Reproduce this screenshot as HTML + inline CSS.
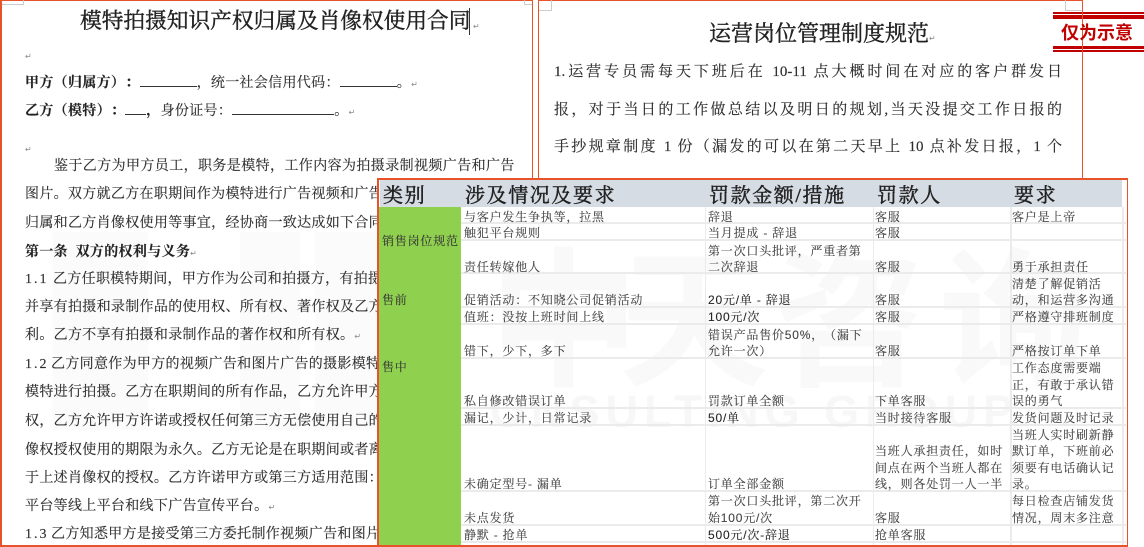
<!DOCTYPE html>
<html lang="zh-CN"><head><meta charset="utf-8"><style>
*{box-sizing:border-box;text-spacing-trim:space-all}
html,body{margin:0;padding:0;background:#fff}
#p{position:relative;width:1144px;height:547px;overflow:hidden;background:#fff;font-family:"Liberation Serif","Noto Serif CJK SC",serif;color:#2c2c2c}
#p div{position:absolute}
.t{white-space:nowrap;line-height:20px;height:20px;font-size:14px;letter-spacing:.32px;left:25px;filter:blur(.25px);-webkit-text-stroke:.15px #333}
.b{font-weight:700;color:#222}
.u{display:inline-block;border-bottom:1px solid #333;height:14px}
.m{font-family:"DejaVu Sans",sans-serif;font-size:8px;color:#888;font-weight:400;letter-spacing:0;-webkit-text-stroke:0}
.r{left:554px;width:508px;font-size:15px;text-align:justify;text-align-last:justify;letter-spacing:0}
.h{white-space:nowrap;top:184px;line-height:24px;font-size:20px;letter-spacing:1.6px;color:#222;filter:blur(.25px);-webkit-text-stroke:.45px #222}
.c{white-space:nowrap;font-family:"Liberation Sans","Noto Serif CJK SC",serif;font-size:12px;letter-spacing:.8px;line-height:16px;height:16px;color:#444;filter:blur(.25px);-webkit-text-stroke:.12px #444;margin-top:1px}
.l{background:#ebebeb}
.w{white-space:nowrap;color:#f9f9f9;font-family:"Noto Sans CJK SC",sans-serif;font-weight:700;line-height:1}
</style></head><body><div id="p">

<div style="left:53px;top:232px;width:95px;height:198px;background:#fbfbfb"></div>
<div style="left:240px;top:232px;width:60px;height:198px;background:#fbfbfb"></div>
<div style="left:315px;top:232px;width:62px;height:198px;background:#fbfbfb"></div>

<div style="left:0;top:0;width:533px;height:547px;border:solid #e8532b;border-width:1px 1px 0 2px"></div>
<div style="left:538px;top:0;width:545px;height:180px;border:1px solid #e8532b;border-bottom:0"></div>
<div style="left:2px;top:0;width:22px;height:5px;border:solid #ccc;border-width:0 1px 1px 0"></div>
<div style="left:524px;top:0;width:8px;height:5px;border:solid #ccc;border-width:0 0 1px 1px"></div>
<div style="left:539px;top:0;width:13px;height:11px;border:solid #ccc;border-width:0 1px 1px 0"></div>
<div style="left:1065px;top:0;width:17px;height:11px;border:solid #ccc;border-width:0 0 1px 1px"></div>

<div class="t" style="left:80px;top:6px;height:30px;line-height:30px;font-size:21.7px;letter-spacing:0;color:#222;-webkit-text-stroke:.4px #222">模特拍摄知识产权归属及肖像权使用合同</div>
<div style="left:469px;top:8px;width:1px;height:27px;background:#333"></div>
<div class="t m" style="left:473px;top:17px">↵</div>
<div class="t m" style="left:25px;top:47px">↵</div>
<div class="t" style="top:73px"><span class="b">甲方（归属方）：</span><span class="u" style="width:57px"></span>，统一社会信用代码：<span class="u" style="width:57px"></span>。<span class="m">↵</span></div>
<div class="t" style="top:101px"><span class="b">乙方（模特）：</span><span class="u" style="width:21px"></span><span class="b">，</span>身份证号：<span class="u" style="width:102px"></span>。<span class="m">↵</span></div>
<div class="t m" style="left:25px;top:140px">↵</div>
<div class="t" style="left:54px;top:157px;letter-spacing:.4px">鉴于乙方为甲方员工，职务是模特，工作内容为拍摄录制视频广告和广告</div>
<div class="t" style="top:185px">图片。双方就乙方在职期间作为模特进行广告视频和广告</div>
<div class="t" style="top:214px">归属和乙方肖像权使用等事宜，经协商一致达成如下合同</div>
<div class="t b" style="top:243px">第一条 &nbsp;双方的权利与义务<span class="m">↵</span></div>
<div class="t" style="top:270px"><span style="display:inline-block;width:28px;letter-spacing:2px">1.1</span>乙方任职模特期间，甲方作为公司和拍摄方，有拍摄</div>
<div class="t" style="top:298px">并享有拍摄和录制作品的使用权、所有权、著作权及乙方</div>
<div class="t" style="top:326px">利。乙方不享有拍摄和录制作品的著作权和所有权。<span class="m">↵</span></div>
<div class="t" style="top:355px"><span style="display:inline-block;width:26px;letter-spacing:2px">1.2</span>乙方同意作为甲方的视频广告和图片广告的摄影模特</div>
<div class="t" style="top:383px">模特进行拍摄。乙方在职期间的所有作品，乙方允许甲方</div>
<div class="t" style="top:412px">权，乙方允许甲方许诺或授权任何第三方无偿使用自己的</div>
<div class="t" style="top:441px">像权授权使用的期限为永久。乙方无论是在职期间或者离</div>
<div class="t" style="top:469px">于上述肖像权的授权。乙方许诺甲方或第三方适用范围：</div>
<div class="t" style="top:497px">平台等线上平台和线下广告宣传平台。<span class="m">↵</span></div>
<div class="t" style="top:525px"><span style="display:inline-block;width:26px;letter-spacing:2px">1.3</span>乙方知悉甲方是接受第三方委托制作视频广告和图片</div>

<div class="t" style="left:709px;top:19px;height:30px;line-height:30px;font-size:22px;letter-spacing:0;color:#222;-webkit-text-stroke:.4px #222">运营岗位管理制度规范<span class="m">↵</span></div>
<div class="t r" style="top:62px">1.运营专员需每天下班后在 10-11 点大概时间在对应的客户群发日</div>
<div class="t r" style="top:100px">报，对于当日的工作做总结以及明日的规划,当天没提交工作日报的</div>
<div class="t r" style="top:137px">手抄规章制度 1 份（漏发的可以在第二天早上 10 点补发日报，1 个</div>
<div class="t" style="left:554px;top:177px;font-size:15px">月可抵扣一次。</div>

<div style="left:1053px;top:12px;width:91px;height:40px;background:#fff"></div>
<div style="left:1053px;top:12px;width:91px;height:2px;background:#c00000"></div>
<div style="left:1053px;top:15px;width:91px;height:4px;background:#c00000"></div>
<div style="left:1053px;top:46px;width:91px;height:3px;background:#c00000"></div>
<div style="left:1053px;top:50px;width:91px;height:2px;background:#c00000"></div>
<div style="left:1082px;top:0;width:1px;height:60px;background:#e8532b"></div>
<div style="left:1061px;top:21px;line-height:22px;font-size:18px;font-weight:700;color:#c00000;white-space:nowrap;font-family:'Noto Sans CJK SC',sans-serif">仅为示意</div>

<div style="left:377px;top:178px;width:751px;height:369px;background:#fff;overflow:hidden"></div>
<div style="left:379px;top:180px;width:747px;height:365px;overflow:hidden" id="wm">
<div class="w" style="left:110px;top:55px;font-size:150px">中</div>
<div class="w" style="left:240px;top:55px;font-size:150px">天</div>
<div class="w" style="left:395px;top:55px;font-size:150px">咨</div>
<div class="w" style="left:560px;top:55px;font-size:150px">询</div>
<div class="w" style="left:111px;top:209px;font-size:45px;letter-spacing:6px;font-family:'Liberation Sans',sans-serif;color:#f7f7f7">ONSULTING GROUP</div>
</div>

<div style="left:380px;top:180px;width:742px;height:27px;background:#d6dce4"></div>
<div style="left:379px;top:207px;width:82px;height:338px;background:#8fd04e"></div>
<div style="left:378px;top:180px;width:1px;height:365px;background:#bbb"></div>

<div class="l" style="left:461px;top:222px;width:665px;height:2px"></div>
<div class="l" style="left:461px;top:239px;width:665px;height:2px"></div>
<div class="l" style="left:461px;top:272px;width:665px;height:2px"></div>
<div class="l" style="left:461px;top:306px;width:665px;height:2px"></div>
<div class="l" style="left:461px;top:323px;width:665px;height:2px"></div>
<div class="l" style="left:461px;top:357px;width:665px;height:2px"></div>
<div class="l" style="left:461px;top:407px;width:665px;height:2px"></div>
<div class="l" style="left:461px;top:424px;width:665px;height:2px"></div>
<div class="l" style="left:461px;top:490px;width:665px;height:2px"></div>
<div class="l" style="left:461px;top:524px;width:665px;height:2px"></div>
<div class="l" style="left:461px;top:541px;width:665px;height:2px"></div>
<div class="l" style="left:705px;top:207px;width:1px;height:338px"></div>
<div class="l" style="left:873px;top:207px;width:1px;height:338px"></div>
<div class="l" style="left:1010px;top:207px;width:2px;height:338px"></div>
<div class="l" style="left:1122px;top:207px;width:2px;height:338px"></div>

<div class="h" style="left:383px">类别</div>
<div class="h" style="left:465px">涉及情况及要求</div>
<div class="h" style="left:709px">罚款金额/措施</div>
<div class="h" style="left:877px">罚款人</div>
<div class="h" style="left:1014px">要求</div>

<div class="c" style="left:382px;top:232px;color:#333">销售岗位规范</div>
<div class="c" style="left:382px;top:291px;color:#333">售前</div>
<div class="c" style="left:382px;top:358px;color:#333">售中</div>

<div class="c" style="left:464px;top:208px">与客户发生争执等，拉黑</div>
<div class="c" style="left:464px;top:224px">触犯平台规则</div>
<div class="c" style="left:464px;top:258px">责任转嫁他人</div>
<div class="c" style="left:464px;top:291px">促销活动：不知晓公司促销活动</div>
<div class="c" style="left:464px;top:308px">值班：没按上班时间上线</div>
<div class="c" style="left:464px;top:342px">错下，少下，多下</div>
<div class="c" style="left:464px;top:392px">私自修改错误订单</div>
<div class="c" style="left:464px;top:409px">漏记，少计，日常记录</div>
<div class="c" style="left:464px;top:475px">未确定型号- 漏单</div>
<div class="c" style="left:464px;top:509px">未点发货</div>
<div class="c" style="left:464px;top:526px">静默 - 抢单</div>

<div class="c" style="left:708px;top:208px">辞退</div>
<div class="c" style="left:708px;top:224px">当月提成 - 辞退</div>
<div class="c" style="left:708px;top:242px">第一次口头批评，严重者第</div>
<div class="c" style="left:708px;top:258px">二次辞退</div>
<div class="c" style="left:708px;top:291px;color:#222">20元/单 - 辞退</div>
<div class="c" style="left:708px;top:308px;color:#222">100元/次</div>
<div class="c" style="left:708px;top:326px">错误产品售价50%，（漏下</div>
<div class="c" style="left:708px;top:342px">允许一次）</div>
<div class="c" style="left:708px;top:392px">罚款订单全额</div>
<div class="c" style="left:708px;top:409px;color:#222">50/单</div>
<div class="c" style="left:708px;top:475px">订单全部金额</div>
<div class="c" style="left:708px;top:492px">第一次口头批评，第二次开</div>
<div class="c" style="left:708px;top:509px">始100元/次</div>
<div class="c" style="left:708px;top:526px;color:#222">500元/次-辞退</div>

<div class="c" style="left:875px;top:208px">客服</div>
<div class="c" style="left:875px;top:224px">客服</div>
<div class="c" style="left:875px;top:258px">客服</div>
<div class="c" style="left:875px;top:291px">客服</div>
<div class="c" style="left:875px;top:308px">客服</div>
<div class="c" style="left:875px;top:342px">客服</div>
<div class="c" style="left:875px;top:392px">下单客服</div>
<div class="c" style="left:875px;top:409px">当时接待客服</div>
<div class="c" style="left:875px;top:442px">当班人承担责任，如时</div>
<div class="c" style="left:875px;top:459px">间点在两个当班人都在</div>
<div class="c" style="left:875px;top:475px">线，则各处罚一人一半</div>
<div class="c" style="left:875px;top:509px">客服</div>
<div class="c" style="left:875px;top:526px">抢单客服</div>

<div class="c" style="left:1012px;top:208px">客户是上帝</div>
<div class="c" style="left:1012px;top:258px">勇于承担责任</div>
<div class="c" style="left:1012px;top:275px">清楚了解促销活</div>
<div class="c" style="left:1012px;top:291px">动，和运营多沟通</div>
<div class="c" style="left:1012px;top:308px">严格遵守排班制度</div>
<div class="c" style="left:1012px;top:342px">严格按订单下单</div>
<div class="c" style="left:1012px;top:359px">工作态度需要端</div>
<div class="c" style="left:1012px;top:376px">正，有敢于承认错</div>
<div class="c" style="left:1012px;top:392px">误的勇气</div>
<div class="c" style="left:1012px;top:409px">发货问题及时记录</div>
<div class="c" style="left:1012px;top:426px">当班人实时刷新静</div>
<div class="c" style="left:1012px;top:442px">默订单，下班前必</div>
<div class="c" style="left:1012px;top:459px">须要有电话确认记</div>
<div class="c" style="left:1012px;top:475px">录。</div>
<div class="c" style="left:1012px;top:492px">每日检查店铺发货</div>
<div class="c" style="left:1012px;top:509px">情况，周末多注意</div>

<div style="left:377px;top:178px;width:751px;height:369px;border:2px solid #e8532b;border-right-width:1px"></div>
<div style="left:0;top:545px;width:378px;height:2px;background:#e8532b"></div>
</div></body></html>
